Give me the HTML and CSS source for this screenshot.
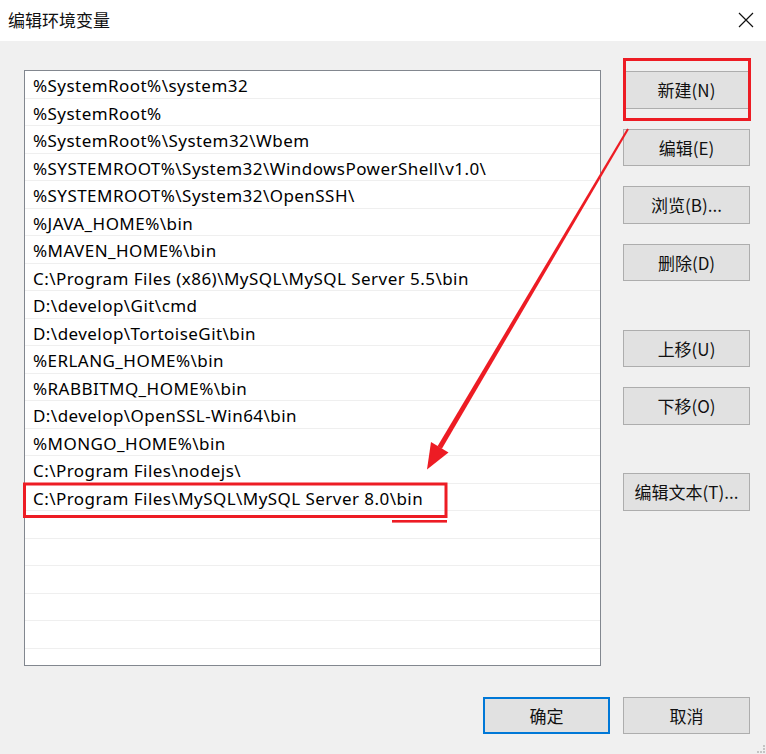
FILE: index.html
```html
<!DOCTYPE html>
<html lang="zh-CN">
<head>
<meta charset="utf-8">
<title>编辑环境变量</title>
<link rel="stylesheet" href="styles.css">
</head>
<body>
<div class="window">
  <div class="titlebar">
    <span class="title">编辑环境变量</span>
    <svg class="close" width="16" height="16" viewBox="0 0 16 16"><path d="M1 1 L15 15 M15 1 L1 15" stroke="#111" stroke-width="1.2" fill="none"/></svg>
  </div>
  <div class="content">
    <div class="main">
      <div class="list">
        <div class="row">%SystemRoot%\system32</div>
        <div class="row">%SystemRoot%</div>
        <div class="row">%SystemRoot%\System32\Wbem</div>
        <div class="row">%SYSTEMROOT%\System32\WindowsPowerShell\v1.0\</div>
        <div class="row">%SYSTEMROOT%\System32\OpenSSH\</div>
        <div class="row">%JAVA_HOME%\bin</div>
        <div class="row">%MAVEN_HOME%\bin</div>
        <div class="row">C:\Program Files (x86)\MySQL\MySQL Server 5.5\bin</div>
        <div class="row">D:\develop\Git\cmd</div>
        <div class="row">D:\develop\TortoiseGit\bin</div>
        <div class="row">%ERLANG_HOME%\bin</div>
        <div class="row">%RABBITMQ_HOME%\bin</div>
        <div class="row">D:\develop\OpenSSL-Win64\bin</div>
        <div class="row">%MONGO_HOME%\bin</div>
        <div class="row">C:\Program Files\nodejs\</div>
        <div class="row">C:\Program Files\MySQL\MySQL Server 8.0\bin</div>
        <div class="row"></div>
        <div class="row"></div>
        <div class="row"></div>
        <div class="row"></div>
        <div class="row"></div>
        <div class="row"></div>
      </div>
      <div class="side">
        <button class="btn">新建(N)</button>
        <button class="btn">编辑(E)</button>
        <button class="btn">浏览(B)...</button>
        <button class="btn">删除(D)</button>
        <button class="btn gap">上移(U)</button>
        <button class="btn">下移(O)</button>
        <button class="btn gap">编辑文本(T)...</button>
      </div>
    </div>
    <div class="footer">
      <button class="btn primary">确定</button>
      <button class="btn">取消</button>
    </div>
    <div class="grip">
      <i class="d1"></i><i class="d2"></i><i class="d3"></i>
    </div>
  </div>
  <svg class="annot" width="766" height="754" viewBox="0 0 766 754">
    <rect x="624.5" y="59.5" width="125" height="60" fill="none" stroke="#ed1c24" stroke-width="3"/>
    <rect x="24.5" y="484" width="421.5" height="32.5" fill="none" stroke="#ed1c24" stroke-width="3"/>
    <rect x="392" y="520" width="55" height="2.6" fill="#ed1c24"/>
    <polygon points="628.9,129.5 627.1,128.5 437.5,446.2 441.9,448.8" fill="#ed1c24"/>
    <polygon points="427,469.5 431,442 448.5,452.5" fill="#ed1c24"/>
  </svg>
</div>
</body>
</html>
```
FILE: styles.css
```css
* { box-sizing: border-box; }
html, body { margin: 0; padding: 0; }
body {
  width: 766px;
  height: 754px;
  overflow: hidden;
  font-family: "Noto Sans", "Noto Sans CJK SC", sans-serif;
  color: #000;
  background: #f0f0f0;
}
.window {
  position: relative;
  width: 766px;
  height: 754px;
  display: flex;
  flex-direction: column;
}
.titlebar {
  height: 41px;
  background: #fff;
  display: flex;
  align-items: center;
  justify-content: space-between;
  padding: 0 12px 2px 8px;
}
.title {
  font-size: 17px;
  font-family: "Noto Sans CJK SC", sans-serif;
  color: #111;
}
.close { display: block; margin-top: 1px; }
.content {
  flex: 1;
  position: relative;
  display: flex;
  flex-direction: column;
  padding: 29px 16px 0 24px;
}
.main {
  display: flex;
  gap: 22px;
}
.list {
  width: 577px;
  height: 596px;
  background: #fff;
  border: 1px solid #82878f;
  overflow: hidden;
}
.row {
  height: 27.5px;
  border-bottom: 1px solid #efefef;
  padding: 1px 0 0 8px;
  font-size: 17px;
  letter-spacing: 0.45px;
  line-height: 27px;
  white-space: nowrap;
}
.side {
  display: flex;
  flex-direction: column;
  gap: 20px;
  padding-top: 1px;
}
.btn {
  width: 127px;
  height: 37.5px;
  background: #e1e1e1;
  border: 1px solid #adadad;
  font-family: "Noto Sans CJK SC", sans-serif;
  font-size: 17px;
  color: #111;
  padding: 0;
  margin: 0;
}
.side .gap { margin-top: 28.5px; }
.footer {
  display: flex;
  justify-content: flex-end;
  gap: 13px;
  margin-top: 31px;
}
.footer .btn { height: 37px; }
.btn.primary {
  border: 2px solid #0078d7;
}
.grip {
  position: absolute;
  right: 1px;
  bottom: 1px;
  width: 10px;
  height: 10px;
}
.grip i {
  position: absolute;
  width: 2px;
  height: 2px;
  background: #c4c4c4;
  box-shadow: -3px 0 #c4c4c4, 0 -3px #c4c4c4;
}
.grip .d1 { right: 0; bottom: 0; }
.grip .d2 { right: 3px; bottom: 0; box-shadow: -3px 0 #c4c4c4; }
.grip .d3 { right: 0; bottom: 3px; box-shadow: 0 -3px #c4c4c4; }
.annot {
  position: absolute;
  left: 0;
  top: 0;
  pointer-events: none;
}
```
